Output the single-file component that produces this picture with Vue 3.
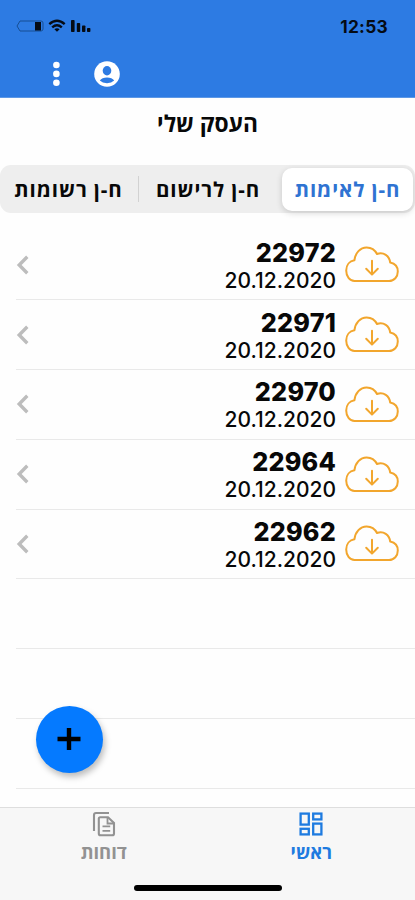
<!-- src/App.vue -->
<template>
  <div class="screen" dir="rtl">
    <!-- status bar + toolbar -->
    <header class="header">
      <div class="status">
        <span class="clock">12:53</span>
        <svg class="status-icons" width="76" height="16" viewBox="0 0 76 16">
          <path d="M1 8 L4 3 H25 Q27 3 27 5 V11 Q27 13 25 13 H4 Z" fill="none" stroke="#174f94" stroke-width="1" />
          <rect x="19" y="4" width="6" height="8.5" fill="#050b14" />
          <g fill="none" stroke="#050b14" stroke-width="2.4">
            <path d="M33.3 6.2 Q41 -0.6 48.7 6.2" />
            <path d="M36.2 9.4 Q41 5.2 45.8 9.4" />
          </g>
          <path d="M38.4 11.2 Q41 9.2 43.6 11.2 L41 13.8 Z" fill="#050b14" />
          <g fill="#050b14">
            <rect x="55" y="2" width="3.6" height="12" rx="0.8" />
            <rect x="60.8" y="5" width="3.4" height="9" rx="0.8" />
            <rect x="66" y="7.5" width="3.4" height="6.5" rx="0.8" />
            <rect x="71" y="10" width="3.4" height="4" rx="0.8" />
          </g>
        </svg>
      </div>
      <div class="toolbar">
        <svg width="26" height="26" viewBox="0 0 26 26">
          <circle cx="13" cy="13" r="12.8" fill="#fff" />
          <ellipse cx="13" cy="9.7" rx="4.3" ry="4.7" fill="#2d7be3" />
          <path d="M5.8 19.6 Q8 16.6 13 16.6 Q18 16.6 20.2 19.6 Q17.5 22.2 13 22.2 Q8.5 22.2 5.8 19.6 Z" fill="#2d7be3" />
        </svg>
        <svg width="8" height="26" viewBox="0 0 8 26">
          <circle v-for="y in [4, 12.9, 21.8]" :key="y" cx="4.4" :cy="y" r="3.3" fill="#fff" />
        </svg>
      </div>
    </header>

    <h1 class="title">העסק שלי</h1>

    <!-- segments -->
    <nav class="segments">
      <button
        v-for="(s, i) in segments"
        :key="s"
        class="segment"
        :class="{ active: i === activeSegment }"
        @click="activeSegment = i"
      >{{ s }}</button>
    </nav>

    <!-- invoices -->
    <main class="list">
      <div v-for="inv in invoices" :key="inv.number" class="row">
        <svg class="cloud" width="54" height="37" viewBox="0 0 54 37">
          <g fill="none" stroke="#f2a62d" stroke-width="2" stroke-linecap="round" stroke-linejoin="round">
            <path d="M9.5 35 C4.6 35 1.2 30.2 1.2 24.6 C1.2 18.8 4.7 15 9.4 14.3 C10.2 7 15.3 1.4 21.6 1.4 C26.3 1.4 30 3.8 32 8 C38.6 5.6 44.4 10 45.2 16.6 C50 17.6 52.8 21.2 52.8 25.6 C52.8 30.8 49.2 35 44 35 Z" />
            <path d="M27 14.8 V28.4 M21.2 22.8 L27 28.6 L32.8 22.8" />
          </g>
        </svg>
        <div class="info">
          <b class="number">{{ inv.number }}</b>
          <span class="date">{{ inv.date }}</span>
        </div>
        <svg class="chevron" width="14" height="22" viewBox="0 0 14 22">
          <path d="M11.3 2.8 L3.2 11 L11.3 19.2" fill="none" stroke="#bdbdbd" stroke-width="3.4" />
        </svg>
      </div>
      <div v-for="n in 3" :key="n" class="row"></div>
      <button class="fab">
        <svg width="24" height="24" viewBox="0 0 24 24">
          <path d="M12 1 V23 M0.5 12 H23.5" stroke="#000" stroke-width="4.4" />
        </svg>
      </button>
    </main>

    <!-- bottom tabs -->
    <footer class="tabs">
      <div class="tab-row">
        <button class="tab active">
          <svg width="24" height="24" viewBox="0 0 24 24" fill="none" stroke="currentColor" stroke-width="2.3">
            <rect x="1.6" y="1.6" width="8.2" height="11" />
            <rect x="14.2" y="1.6" width="8.2" height="5.8" />
            <rect x="1.6" y="16.8" width="8.2" height="5.6" />
            <rect x="14.2" y="11.6" width="8.2" height="10.8" />
          </svg>
          <span>ראשי</span>
        </button>
        <button class="tab">
          <svg width="24" height="26" viewBox="0 0 24 26" fill="none" stroke="currentColor" stroke-width="2.1">
            <path d="M2 20 V4 Q2 2 4 2 H17" />
            <path d="M8.2 6.2 H16 L22 12 V22.4 Q22 24.2 20.2 24.2 H8.6 Q6.8 24.2 6.8 22.4 V7.8 Q6.8 6.2 8.2 6.2 Z" />
            <path d="M15.5 6.5 V12.5 H22 M10.5 15.4 H18.2 M10.5 19.8 H18.2" stroke-width="1.8" />
          </svg>
          <span>דוחות</span>
        </button>
      </div>
      <div class="home-bar"></div>
    </footer>
  </div>
</template>

<script setup>
import { ref } from 'vue'

const segments = ['ח-ן לאימות', 'ח-ן לרישום', 'ח-ן רשומות']
const activeSegment = ref(0)

const invoices = [
  { number: '22972', date: '20.12.2020' },
  { number: '22971', date: '20.12.2020' },
  { number: '22970', date: '20.12.2020' },
  { number: '22964', date: '20.12.2020' },
  { number: '22962', date: '20.12.2020' },
]
</script>

<style>
body { margin: 0; background: #fff; }
</style>

<style scoped>
.screen {
  display: flex; flex-direction: column;
  height: 900px; overflow: hidden;
  background: #fefefe; color: #080808;
  font-family: "Open Sans", "Liberation Sans", sans-serif;
}
button { margin: 0; padding: 0; border: 0; background: none; font: inherit; color: inherit; }
svg { display: block; flex: none; }

/* header */
.header { flex: none; height: 98px; box-sizing: border-box; background: #2d7be3; border-bottom: 1px solid #5d98e6; }
.status { display: flex; justify-content: space-between; align-items: center; height: 52px; padding: 0 27px 0 16px; }
.clock { font: 700 17.3px "Inter", sans-serif; letter-spacing: 0.3px; color: #050b14; }
.toolbar { display: flex; justify-content: flex-end; align-items: center; gap: 34px; height: 44px; padding-left: 52px; }

.title { flex: none; margin: 0; height: 67px; line-height: 51px; text-align: center; font-size: 22.8px; font-weight: 700; }

/* segments */
.segments {
  flex: none; display: flex; align-items: center;
  height: 48px; padding-right: 2px; box-sizing: border-box;
  background: #eee; border-radius: 11px;
}
.segment {
  flex: 1; height: 26px; padding-right: 5px; box-sizing: border-box;
  font-size: 20.5px; line-height: 26px; font-weight: 700; letter-spacing: 0.9px; white-space: nowrap;
}
.segment:last-child { flex: 0 0 139px; padding-right: 1px; border-right: 1px solid #d2d2d2; }
.segment.active {
  flex: 0 0 131px; height: 43px; padding: 0; line-height: 43px;
  background: #fff; color: #2f73d2; border-radius: 10px;
  box-shadow: 0 2px 6px rgba(0, 0, 0, 0.16);
}

/* list */
.list { position: relative; flex: 1; padding-top: 17.4px; }
.row {
  display: flex; align-items: center;
  height: 69.8px; box-sizing: border-box; margin-left: 16px; padding-right: 16px;
  border-bottom: 1px solid #e9e9e9;
}
.info { display: flex; flex-direction: column; align-items: flex-start; margin-right: 9px; padding-top: 3px; font-family: "Inter", sans-serif; }
.number { font-size: 25.2px; line-height: 28px; font-weight: 800; letter-spacing: 0.2px; }
.date { font-size: 21px; line-height: 27px; font-weight: 500; }
.chevron { margin-right: auto; }

.fab {
  position: absolute; left: 36px; top: 493px;
  display: grid; place-items: center;
  width: 67px; height: 67px; padding: 0 1px 1px 0; border-radius: 50%;
  background: #057aff; box-shadow: 2px 4px 6px rgba(0, 0, 0, 0.26);
}

/* tabs */
.tabs { flex: none; height: 93px; box-sizing: border-box; background: #f7f7f7; border-top: 1px solid #dedede; }
.tab-row { display: flex; height: 77px; }
.tab { flex: 1; display: flex; flex-direction: column; align-items: center; padding-top: 3px; color: #929292; font-size: 18.4px; line-height: 24px; font-weight: 700; }
.tab svg { height: 26px; }
.tab span { margin-top: 3px; }
.tab.active { color: #1e7be0; }
.home-bar { width: 148px; height: 6px; margin: 0 auto; border-radius: 3px; background: #000; }
</style>
